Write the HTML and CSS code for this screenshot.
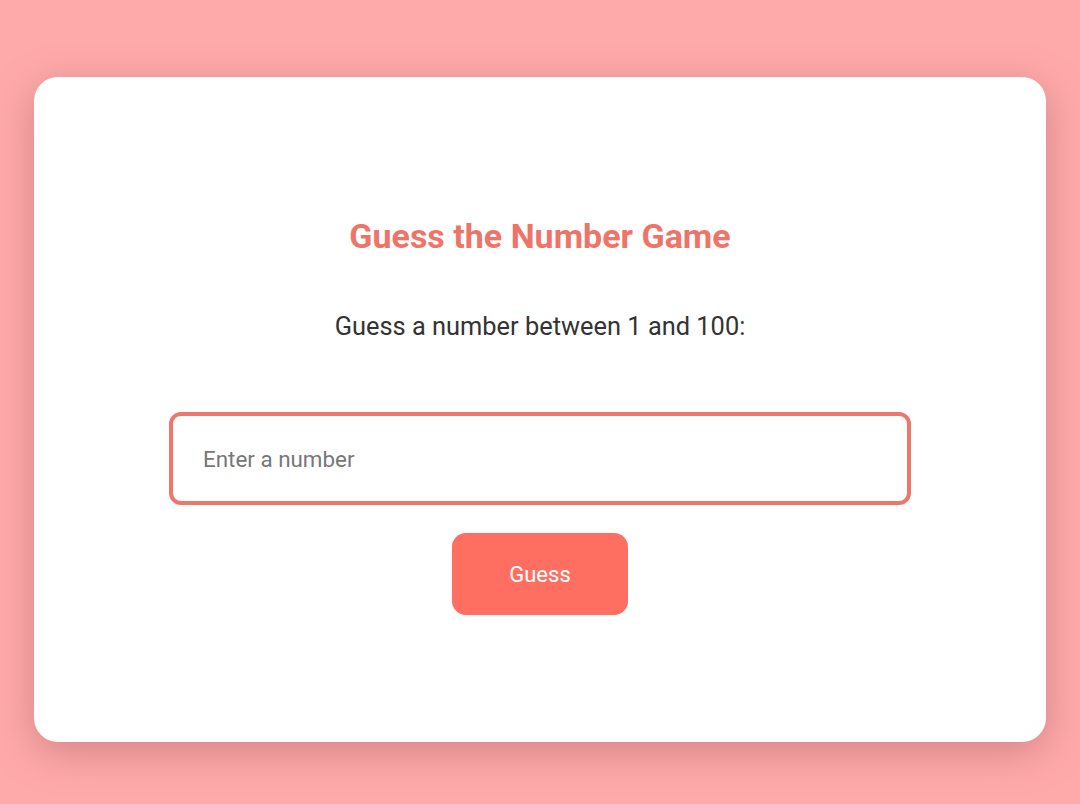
FILE: index.html
```html
<!DOCTYPE html>
<html lang="en">
<head>
<meta charset="utf-8">
<title>Guess the Number Game</title>
<link rel="stylesheet" href="styles.css">
</head>
<body>
<main class="card">
  <h1 class="title">Guess the Number Game</h1>
  <p class="prompt">Guess a number between 1 and 100:</p>
  <input class="guess-input" type="number" placeholder="Enter a number">
  <button class="guess-btn" type="button">Guess</button>
</main>
</body>
</html>
```
FILE: styles.css
```css
html, body {
  margin: 0;
  padding: 0;
}
body {
  width: 1080px;
  height: 804px;
  background: #ffaaaa;
  font-family: Roboto, "Liberation Sans", sans-serif;
  display: flex;
  justify-content: center;
  align-items: flex-start;
  padding-top: 77px;
  box-sizing: border-box;
  overflow: hidden;
}
.card {
  width: 1012px;
  height: 665px;
  box-sizing: border-box;
  background: #fff;
  border-radius: 24px;
  box-shadow: 0 10px 40px rgba(140, 60, 60, 0.35);
  display: flex;
  flex-direction: column;
  align-items: center;
  padding: 0 135px;
}
.title {
  margin: 139px 0 0;
  font-size: 34px;
  line-height: 40px;
  font-weight: 700;
  color: #ef7468;
}
.prompt {
  margin: 55px 0 0;
  font-size: 25.4px;
  line-height: 30px;
  color: #333;
}
.guess-input {
  margin-top: 71px;
  width: 742px;
  height: 93px;
  box-sizing: border-box;
  border: 4px solid #ee776c;
  border-radius: 12px;
  padding: 0 30px;
  font-family: inherit;
  font-size: 22.4px;
  color: #333;
  outline: none;
  -moz-appearance: textfield;
}
.guess-input::placeholder {
  color: #777;
}
.guess-input::-webkit-outer-spin-button,
.guess-input::-webkit-inner-spin-button {
  -webkit-appearance: none;
  margin: 0;
}
.guess-btn {
  margin-top: 28px;
  width: 176px;
  height: 82px;
  border: none;
  border-radius: 14px;
  background: #ff6f61;
  color: #fff;
  font-family: inherit;
  font-size: 22px;
  cursor: pointer;
}
```
